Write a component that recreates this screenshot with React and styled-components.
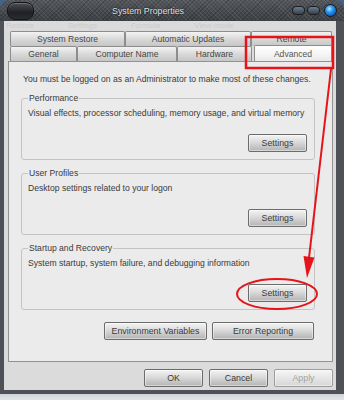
import React from "react";
import styled, { createGlobalStyle } from "styled-components";

const Global = createGlobalStyle`
  html, body { margin: 0; padding: 0; }
  body {
    background: #d9d9d9;
    font-family: "Liberation Sans", Arial, sans-serif;
  }
`;

const Desktop = styled.div`
  position: relative;
  width: 344px;
  height: 400px;
  overflow: hidden;
  display: flex;
  flex-direction: column;
  background: linear-gradient(#42638a 0, #42638a 12px, #d9d9d9 12px);
`;

const Window = styled.div`
  width: 344px;
  height: 394px;
  display: flex;
  flex-direction: column;
  flex-shrink: 0;
`;

const TitleBar = styled.div`
  height: 21px;
  flex-shrink: 0;
  display: flex;
  align-items: center;
  padding: 0 7px 0 7px;
  border-radius: 9px 9px 0 0;
  background:
    repeating-linear-gradient(45deg, rgba(255, 255, 255, 0.07) 0 1px, transparent 1px 3px),
    repeating-linear-gradient(-45deg, rgba(0, 0, 0, 0.18) 0 1px, transparent 1px 3px),
    linear-gradient(#55585d, #3c3f44);
`;

const Pill = styled.div`
  width: 25px;
  height: 16px;
  border-radius: 8px;
  border: 1px solid #141517;
  background: linear-gradient(#4b4e53, #1f2124 60%, #2b2d31);
  box-shadow: inset 0 1px 0 rgba(255, 255, 255, 0.2);
`;

const Title = styled.div`
  flex: 1;
  text-align: center;
  padding-right: 30px;
  font-size: 8.8px;
  color: #e2e2e2;
  text-shadow: 0 0 2px #000;
  white-space: nowrap;
`;

const Controls = styled.div`
  display: flex;
  align-items: center;
  gap: 2px;
`;

const MiniPill = styled.div`
  width: 11px;
  height: 7px;
  border-radius: 4px;
  border: 1px solid #1b1d20;
  background: linear-gradient(#6d7d90, #35404c);
`;

const Orb = styled.div`
  width: 11px;
  height: 11px;
  margin-left: 2px;
  border-radius: 50%;
  border: 1px solid #0f1a2a;
  background: radial-gradient(circle at 40% 35%, #bfe6ff 0, #2c98f0 35%, #0a55b8 80%);
`;

const Body = styled.div`
  flex: 1;
  display: flex;
  flex-direction: column;
  background: #dbdbdb;
  border: solid #4e5257;
  border-width: 0 8px 4px 4px;
`;

const GhostRow = styled.div`
  height: 10px;
  display: flex;
  gap: 34px;
  padding-left: 2px;
  font-size: 8px;
  line-height: 10px;
  color: #cbcbcb;
  white-space: nowrap;
`;

const TabStrip = styled.div`
  margin-left: 6px;
  width: 322px;
  display: flex;
  flex-direction: column;
`;

const TabRow = styled.div`
  display: flex;
  align-items: flex-end;
  height: 15px;
`;

const Tab = styled.div`
  width: ${(p) => p.$w}px;
  height: ${(p) => (p.$active ? 16 : 15)}px;
  box-sizing: border-box;
  display: flex;
  align-items: center;
  justify-content: center;
  font-size: 8.6px;
  white-space: nowrap;
  color: ${(p) => (p.$active ? "#555" : "#474747")};
  border: 1px solid #8d8d8d;
  border-bottom: none;
  border-radius: 2px 2px 0 0;
  margin-left: ${(p) => p.$gap || 0}px;
  background: ${(p) =>
    p.$active
      ? "linear-gradient(#ffffff, #f4f4f4 60%, #e9e9e9)"
      : "linear-gradient(#f3f3f3, #d9d9d9 50%, #c6c6c6)"};
`;

const Panel = styled.div`
  margin: 0 3px 0 4px;
  background: #ebebeb;
  border: 1px solid #929292;
  padding: 10px 17px 21px 12px;
  display: flex;
  flex-direction: column;
`;

const Info = styled.div`
  font-size: 8.6px;
  line-height: 14px;
  color: #3a3a3a;
  padding-left: 2px;
  margin-bottom: 6px;
  white-space: nowrap;
`;

const Group = styled.fieldset`
  margin: 0 0 ${(p) => p.$after}px 0;
  padding: 0 7px 7px 6px;
  border: 1px solid #c4c4c4;
  border-radius: 3px;
  min-width: 0;
  display: flex;
  flex-direction: column;
`;

const Legend = styled.legend`
  font-size: 8.6px;
  line-height: 12px;
  color: #3a3a3a;
  padding: 0 1px;
  margin-left: 0;
  white-space: nowrap;
`;

const Desc = styled.div`
  font-size: 8.6px;
  line-height: 14px;
  color: #3a3a3a;
  margin-top: 2px;
  white-space: nowrap;
`;

const ButtonRow = styled.div`
  display: flex;
  justify-content: flex-end;
  gap: ${(p) => p.$gap || 5}px;
  margin-top: ${(p) => p.$top || 0}px;
  padding-right: ${(p) => p.$right || 0}px;
`;

const Button = styled.button`
  width: ${(p) => p.$w || 59}px;
  height: 18px;
  padding: 0;
  box-sizing: border-box;
  font-family: "Liberation Sans", Arial, sans-serif;
  font-size: 8.8px;
  white-space: nowrap;
  color: ${(p) => (p.disabled ? "#a3a3a3" : "#3b3b3b")};
  border: 1px solid ${(p) => (p.disabled ? "#9c9c9c" : "#6c6c6c")};
  border-radius: 2px;
  background: ${(p) =>
    p.disabled
      ? "linear-gradient(#f6f6f6, #e6e6e6 50%, #d6d6d6)"
      : "linear-gradient(#f4f4f4, #dadada 45%, #b3b3b3)"};
  box-shadow: inset 0 0 0 1px rgba(255, 255, 255, 0.45);
`;

const Overlay = styled.svg`
  position: absolute;
  left: 0;
  top: 0;
  pointer-events: none;
`;

const Behind = styled.div`
  flex: 1;
  background: linear-gradient(#cfd3d8, #e4e4e4);
`;

const groups = [
  {
    title: "Performance",
    text: "Visual effects, processor scheduling, memory usage, and virtual memory",
    after: 7,
  },
  {
    title: "User Profiles",
    text: "Desktop settings related to your logon",
    after: 7,
  },
  {
    title: "Startup and Recovery",
    text: "System startup, system failure, and debugging information",
    after: 12,
  },
];

export default function App() {
  return (
    <Desktop>
      <Global />
      <Window>
        <TitleBar>
          <Pill />
          <Title>System Properties</Title>
          <Controls>
            <MiniPill />
            <MiniPill />
            <Orb />
          </Controls>
        </TitleBar>
        <Body>
          <GhostRow>
            <span>Restore</span>
            <span>Settings</span>
            <span>Formula</span>
            <span>View mode</span>
          </GhostRow>
          <TabStrip>
            <TabRow>
              <Tab $w={115}>System Restore</Tab>
              <Tab $w={126}>Automatic Updates</Tab>
              <Tab $w={81}>Remote</Tab>
            </TabRow>
            <TabRow>
              <Tab $w={67}>General</Tab>
              <Tab $w={100}>Computer Name</Tab>
              <Tab $w={75}>Hardware</Tab>
              <Tab $w={78} $gap={2} $active>
                Advanced
              </Tab>
            </TabRow>
          </TabStrip>
          <Panel>
            <Info>You must be logged on as an Administrator to make most of these changes.</Info>
            {groups.map((g) => (
              <Group key={g.title} $after={g.after}>
                <Legend>{g.title}</Legend>
                <Desc>{g.text}</Desc>
                <ButtonRow $top={14}>
                  <Button>Settings</Button>
                </ButtonRow>
              </Group>
            ))}
            <ButtonRow $right={1}>
              <Button $w={103}>Environment Variables</Button>
              <Button $w={102}>Error Reporting</Button>
            </ButtonRow>
          </Panel>
          <ButtonRow $top={7} $gap={6} $right={3}>
            <Button>OK</Button>
            <Button>Cancel</Button>
            <Button disabled>Apply</Button>
          </ButtonRow>
        </Body>
      </Window>
      <Behind />
      <Overlay width="344" height="400" viewBox="0 0 344 400">
        <rect x="246" y="37" width="87" height="31" fill="none" stroke="#e5141a" strokeWidth="2.5" />
        <line x1="331" y1="69" x2="308.5" y2="262" stroke="#e5141a" strokeWidth="2" />
        <polygon points="303.5,256 314.5,257.5 307,278" fill="#e5141a" />
        <ellipse cx="277" cy="294" rx="40" ry="15" fill="none" stroke="#e5141a" strokeWidth="2" />
      </Overlay>
    </Desktop>
  );
}
